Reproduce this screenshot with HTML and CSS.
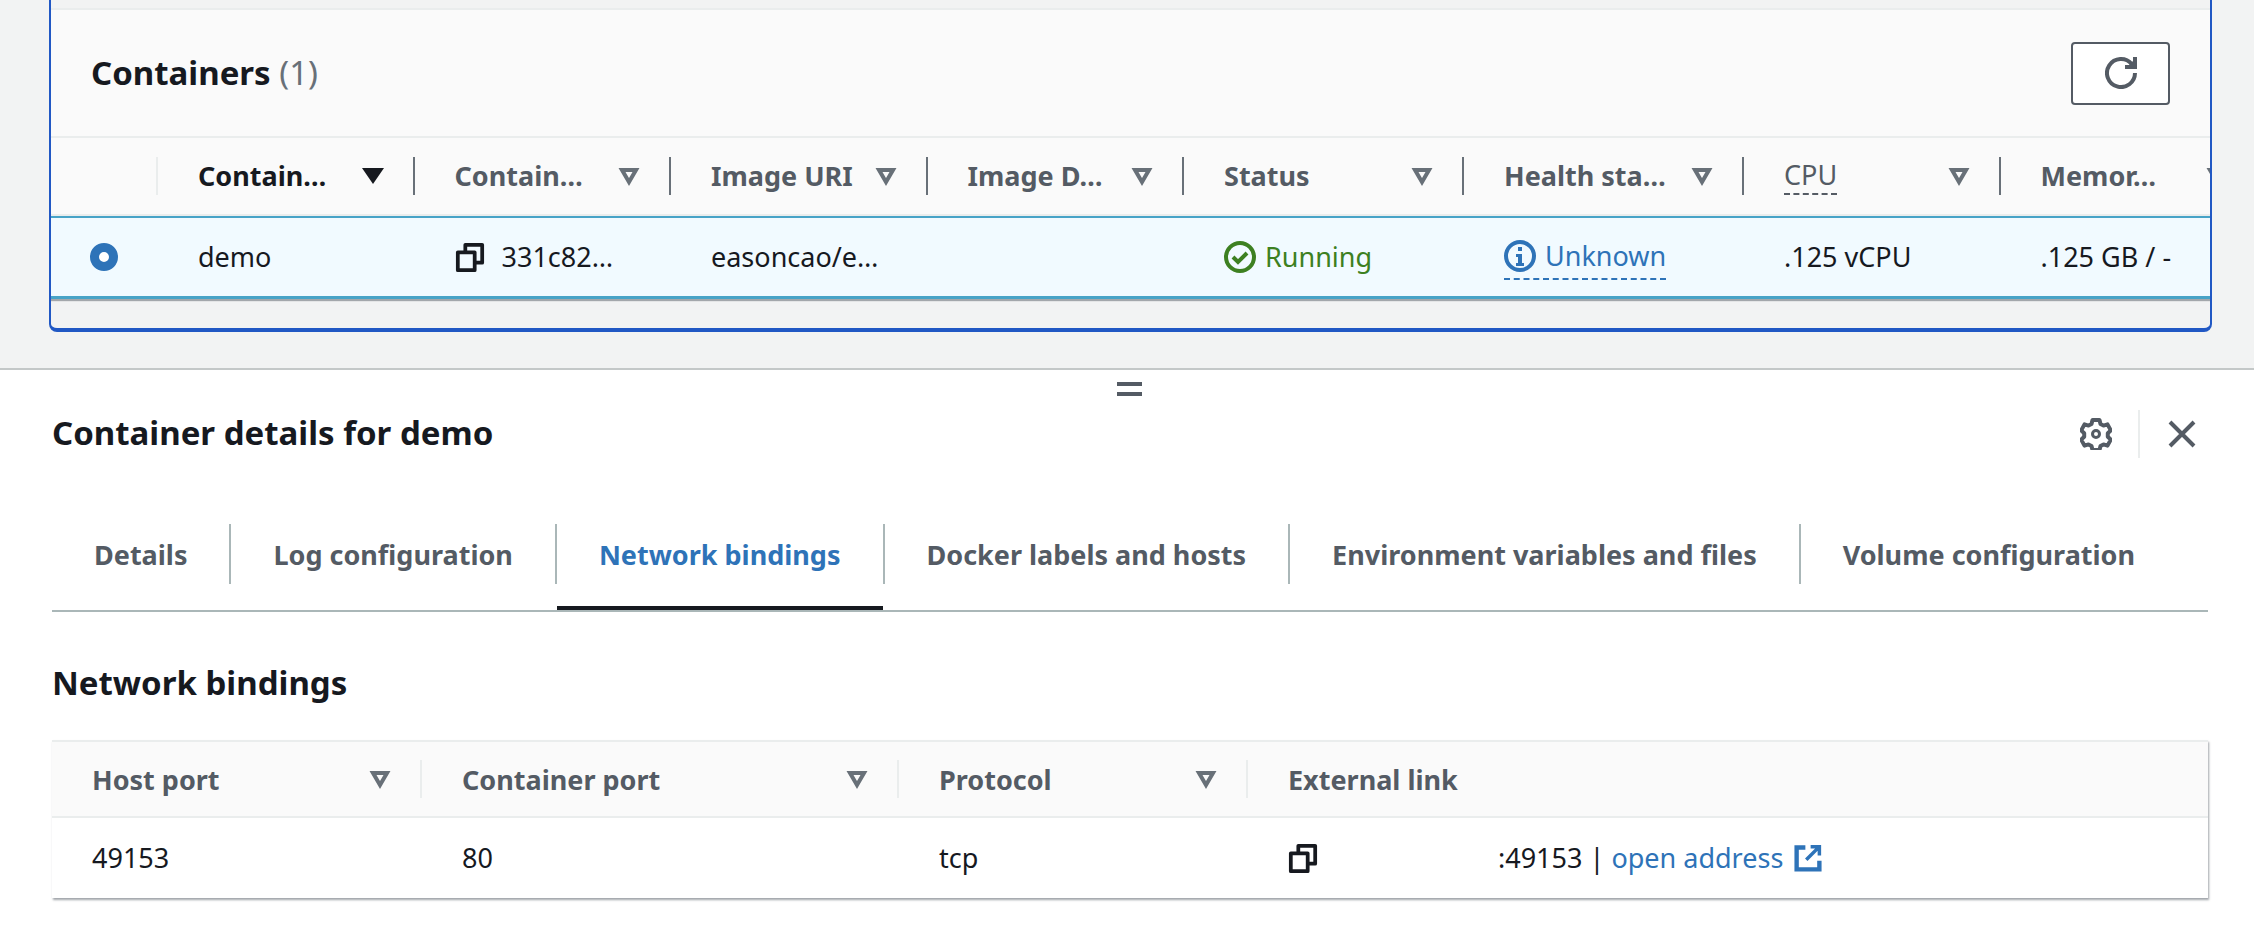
FILE: index.html
```html
<!DOCTYPE html>
<html lang="en">
<head>
<meta charset="utf-8">
<title>Container details for demo</title>
<link rel="stylesheet" href="styles.css">
</head>
<body>
<svg class="sprite" aria-hidden="true">
  <symbol id="caret" viewBox="0 0 32 32"><path d="M9 10h14l-7 12z" fill="none" stroke="currentColor" stroke-width="4" stroke-linejoin="miter"/></symbol>
  <symbol id="caret-fill" viewBox="0 0 32 32"><path d="M5 8h22L16 24z" fill="currentColor"/></symbol>
  <symbol id="copy" viewBox="0 0 32 32"><path d="M3 11h18v19H3zM11 11V3h18v19h-8" fill="none" stroke="currentColor" stroke-width="4" stroke-linejoin="round"/></symbol>
  <symbol id="refresh" viewBox="0 0 32 32"><path d="M26.700 7A14 14 0 1 0 30 16" fill="none" stroke="currentColor" stroke-width="4"/><path d="M20 8h8V0h4v12H20z" fill="currentColor"/><path d="M28 4v6h-6z" fill="currentColor"/></symbol>
  <symbol id="check" viewBox="0 0 32 32"><circle cx="16" cy="16" r="14" fill="none" stroke="currentColor" stroke-width="4"/><path d="M9 16l5 5 9-9" fill="none" stroke="currentColor" stroke-width="4"/></symbol>
  <symbol id="info" viewBox="0 0 32 32"><circle cx="16" cy="16" r="14" fill="none" stroke="currentColor" stroke-width="4"/><path d="M14 7h4v4h-4zM12 14h6v9h2v3h-8v-3h2v-6h-2z" fill="currentColor"/></symbol>
  <symbol id="gear" viewBox="0 0 32 32"><path d="M12.500 2h7l1 4 3 1.600 4-1.200 3.300 6-3 2.800v3.600l3 2.800-3.300 6-4-1.200-3 1.600-1 4h-7l-1-4-3-1.600-4 1.200-3.300-6 3-2.800v-3.600l-3-2.800 3.300-6 4 1.200 3-1.600z" fill="none" stroke="currentColor" stroke-width="4" stroke-linejoin="round"/><circle cx="16" cy="16" r="3.500" fill="none" stroke="currentColor" stroke-width="3"/></symbol>
  <symbol id="close" viewBox="0 0 32 32"><path d="M4 4l24 24M28 4L4 28" fill="none" stroke="currentColor" stroke-width="4"/></symbol>
  <symbol id="external" viewBox="0 0 32 32"><path d="M13 4H3v25h26V19" fill="none" stroke="currentColor" stroke-width="5"/><path d="M19 3h10v10M29 3L14 18" fill="none" stroke="currentColor" stroke-width="4"/></symbol>
</svg>

<main class="top">
  <section class="card">
    <header class="card-head">
      <h2 class="card-title">Containers <span class="count">(1)</span></h2>
      <button class="refresh" type="button" aria-label="Refresh"><svg class="icon-32"><use href="#refresh"/></svg></button>
    </header>
    <div class="grid-head">
      <div class="gh gh-radio"></div>
      <div class="gh gh-a active"><span>Contain…</span><svg class="caret"><use href="#caret-fill"/></svg></div>
      <div class="gh gh-a"><span>Contain…</span><svg class="caret"><use href="#caret"/></svg></div>
      <div class="gh gh-a"><span>Image URI</span><svg class="caret"><use href="#caret"/></svg></div>
      <div class="gh gh-a"><span>Image D…</span><svg class="caret"><use href="#caret"/></svg></div>
      <div class="gh gh-b"><span>Status</span><svg class="caret"><use href="#caret"/></svg></div>
      <div class="gh gh-b"><span>Health sta…</span><svg class="caret"><use href="#caret"/></svg></div>
      <div class="gh gh-a"><span class="dotted">CPU</span><svg class="caret"><use href="#caret"/></svg></div>
      <div class="gh gh-a gh-last"><span>Memor…</span><svg class="caret"><use href="#caret"/></svg></div>
    </div>
    <div class="grid-row">
      <div class="gc gc-radio"><span class="radio"></span></div>
      <div class="gc gc-a">demo</div>
      <div class="gc gc-a"><svg class="icon-copy"><use href="#copy"/></svg>331c82…</div>
      <div class="gc gc-a">easoncao/e…</div>
      <div class="gc gc-a"></div>
      <div class="gc gc-b status"><svg class="icon-32"><use href="#check"/></svg>Running</div>
      <div class="gc gc-b"><span class="health"><svg class="icon-32"><use href="#info"/></svg>Unknown</span></div>
      <div class="gc gc-a">.125 vCPU</div>
      <div class="gc gc-last">.125 GB / -</div>
    </div>
  </section>
</main>

<section class="panel">
  <div class="grip"></div>
  <header class="panel-head">
    <h2 class="panel-title">Container details for demo</h2>
    <div class="panel-tools">
      <svg class="icon-32"><use href="#gear"/></svg>
      <span class="tool-sep"></span>
      <svg class="icon-32"><use href="#close"/></svg>
    </div>
  </header>
  <nav class="tabs">
    <a class="tab">Details</a>
    <a class="tab">Log configuration</a>
    <a class="tab current">Network bindings</a>
    <a class="tab">Docker labels and hosts</a>
    <a class="tab">Environment variables and files</a>
    <a class="tab">Volume configuration</a>
  </nav>
  <h3 class="sub-title">Network bindings</h3>
  <div class="bindings">
    <div class="b-head">
      <div class="bh b-1"><span>Host port</span><svg class="caret"><use href="#caret"/></svg></div>
      <div class="bh b-2"><span>Container port</span><svg class="caret"><use href="#caret"/></svg></div>
      <div class="bh b-3"><span>Protocol</span><svg class="caret"><use href="#caret"/></svg></div>
      <div class="bh b-4"><span>External link</span></div>
    </div>
    <div class="b-row">
      <div class="bc b-1">49153</div>
      <div class="bc b-2">80</div>
      <div class="bc b-3">tcp</div>
      <div class="bc b-4">
        <svg class="icon-copy"><use href="#copy"/></svg>
        <span class="addr">:49153 | <a class="link">open address</a></span>
        <svg class="icon-ext"><use href="#external"/></svg>
      </div>
    </div>
  </div>
</section>
</body>
</html>
```

FILE: styles.css
```css
* { box-sizing: border-box; }
html, body { margin: 0; padding: 0; }
body {
  width: 2254px;
  height: 940px;
  overflow: hidden;
  background: #fff;
  font-family: "Noto Sans", "Open Sans", sans-serif;
  font-size: 27px;
  color: #16191f;
}
.sprite { display: none; }
svg { display: block; flex: none; }
h2, h3 { margin: 0; }

.top {
  height: 370px;
  padding: 0 42px 0 49px;
  background: #f2f3f3;
  border-bottom: 2px solid #c4c8c8;
}
.card {
  height: 332px;
  padding-top: 8px;
  border: solid #2158c4;
  border-width: 0 2px 4px;
  border-radius: 0 0 8px 8px;
  overflow: hidden;
}
.card-head {
  height: 128px;
  display: flex;
  align-items: center;
  justify-content: space-between;
  padding: 0 40px 0 40px;
  background: #fafafa;
  border-top: 2px solid #eaeded;
}
.card-title { font-size: 33px; font-weight: 700; line-height: 40px; }
.count { font-weight: 400; color: #687078; }
.refresh {
  width: 99px;
  height: 63px;
  padding: 0;
  display: flex;
  align-items: center;
  justify-content: center;
  background: #fff;
  border: 2px solid #545b64;
  border-radius: 4px;
  color: #545b64;
}
.icon-32 { width: 32px; height: 32px; }

.grid-head {
  height: 80px;
  display: flex;
  align-items: center;
  overflow: hidden;
  background: #fafafa;
  border-top: 2px solid #eaeded;
  border-bottom: 2px solid #eaeded;
  color: #545b64;
  font-weight: 700;
}
.gh {
  flex: none;
  height: 38px;
  display: flex;
  align-items: center;
  justify-content: space-between;
  padding: 0 24px 0 40px;
  border-right: 2px solid #687078;
  line-height: 36px;
}
.gh-radio { width: 107px; padding: 0; border-right-color: #eaeded; }
.gh-a { width: 256.500px; }
.gh-b { width: 280px; }
.gh-last { border-right: 0; }
.gh.active { color: #16191f; }
.dotted { border-bottom: 2px dashed #545b64; height: 38px; font-weight: 400; }
.caret { width: 32px; height: 32px; color: #687078; }
.active .caret { color: #16191f; }

.grid-row {
  height: 83px;
  display: flex;
  align-items: center;
  background: #f1faff;
  border-top: 2px solid #47a3c7;
  border-bottom: 3px solid #47a3c7;
  box-shadow: 0 2px 1px rgba(84, 91, 100, .5);
}
.gc {
  flex: none;
  display: flex;
  align-items: center;
  padding-left: 40px;
  line-height: 36px;
}
.gc-radio { width: 107px; padding-left: 39px; }
.gc-a { width: 256.500px; }
.gc-b { width: 280px; }
.gc-last { width: 240px; }
.radio {
  width: 28px;
  height: 28px;
  border-radius: 50%;
  background: #fff;
  border: 9px solid #2e73b8;
}
.icon-copy { width: 30px; height: 30px; margin-right: 17px; }
.status { color: #3d8021; gap: 9px; }
.health {
  display: flex;
  align-items: center;
  gap: 9px;
  height: 44px;
  margin-top: 2px;
  padding-bottom: 2px;
  color: #2e73b8;
  border-bottom: 2px dashed #2e73b8;
}

.panel { position: relative; padding: 0 46px 0 52px; }
.grip {
  position: absolute;
  left: 1117px;
  top: 12px;
  width: 25px;
  height: 14px;
  border: solid #545b64;
  border-width: 4px 0;
}
.panel-head {
  height: 154px;
  display: flex;
  align-items: flex-start;
  justify-content: space-between;
  padding-top: 40px;
}
.panel-title { font-size: 33px; font-weight: 700; line-height: 40px; margin-top: 3px; }
.panel-tools { display: flex; align-items: center; color: #545b64; padding-right: 10px; }
.tool-sep { width: 2px; height: 48px; margin: 0 26px; background: #eaeded; }

.tabs {
  height: 88px;
  display: flex;
  border-bottom: 2px solid #aab7b8;
  align-items: flex-start;
}
.tab {
  position: relative;
  height: 60px;
  padding: 0 42px;
  display: flex;
  align-items: center;
  color: #545b64;
  font-weight: 700;
  border-right: 2px solid #aab7b8;
}
.tab:last-child { border-right: 0; }
.tab.current { color: #2e73b8; }
.tab.current::after {
  content: "";
  position: absolute;
  left: 0;
  right: 0;
  top: 82px;
  height: 4px;
  background: #16191f;
}

.sub-title { font-size: 33px; font-weight: 700; line-height: 40px; margin: 51px 0 37px; }

.bindings {
  border-top: 2px solid #eaeded;
  box-shadow: 1px 2px 2px rgba(84, 91, 100, .55);
}
.b-head {
  height: 76px;
  display: flex;
  align-items: center;
  background: #fafafa;
  border-bottom: 2px solid #eaeded;
  color: #545b64;
  font-weight: 700;
}
.bh {
  flex: none;
  height: 38px;
  display: flex;
  align-items: center;
  justify-content: space-between;
  padding: 0 24px 0 40px;
  border-right: 2px solid #eaeded;
}
.b-1 { width: 370px; }
.b-2 { width: 477px; }
.b-3 { width: 349px; }
.b-4 { flex: 1; border-right: 0; }
.b-row { height: 80px; display: flex; align-items: center; }
.bc { flex: none; padding-left: 40px; line-height: 36px; display: flex; align-items: center; }
.addr { margin-left: 163px; white-space: pre; }
.link { color: #2e73b8; }
.icon-ext { width: 28px; height: 30px; margin-left: 11px; color: #2e73b8; }
```
